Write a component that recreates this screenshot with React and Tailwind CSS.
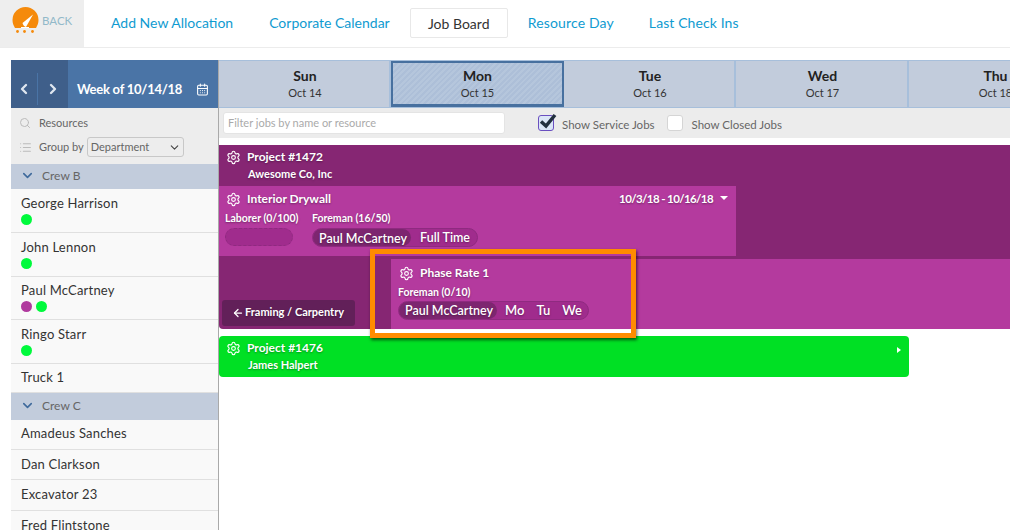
import React from "react";
import { Settings, ChevronLeft, ChevronRight, ChevronDown, CalendarDays, Search, List, ArrowLeft } from "lucide-react";

const ts = "[text-shadow:0_1px_2px_rgba(0,0,0,0.35)]";

function Gear() {
  return <Settings size={15} strokeWidth={1.8} className="text-white shrink-0" />;
}

function Logo() {
  return (
    <svg width="27" height="27" viewBox="0 0 27 27" className="shrink-0">
      <path d="M0.500 13a13 13 0 0 1 26 0c0 3-1 5.500-2.500 8H3c-1.500-2.500-2.500-5-2.500-8z" fill="#f58a0b" />
      <path d="M10.500 16 L21 7.500 L14 20 Q11.500 19.500 10.500 16z" fill="#fff" />
      <path d="M9 21h8v-1H9z" fill="#fff" />
      <circle cx="5.500" cy="24.500" r="1.400" fill="#f58a0b" />
      <circle cx="12.500" cy="24.500" r="1.400" fill="#f58a0b" />
      <circle cx="20.500" cy="24.500" r="1.400" fill="#f58a0b" />
    </svg>
  );
}

function Row({ name, dots = [], h, pt = "pt-[5px]" }) {
  return (
    <div className={`${h} ${pt} border-b border-[#e0e0e0] bg-[#f9f9f9] pl-[10px] box-border`}>
      <div className="text-[13px] leading-[18px] tracking-[0.2px] text-[#333]">{name}</div>
      {dots.length > 0 && (
        <div className="flex gap-[4px] mt-[2px]">
          {dots.map((c, i) => (
            <span key={i} className={`w-[11px] h-[11px] rounded-full ${c}`} />
          ))}
        </div>
      )}
    </div>
  );
}

function Crew({ name, h }) {
  return (
    <div className={`${h} bg-[#c2ccdc] flex items-center pl-[9px] pb-[2px] text-[12px] text-[#666]`}>
      <ChevronDown size={15} strokeWidth={2.5} className="text-[#3f6a9c] mr-[7px]" />
      {name}
    </div>
  );
}

function Day({ d, s, active, w }) {
  return (
    <div
      className={`${w} shrink-0 h-full box-border flex flex-col items-center ${
        active
          ? "pt-[4px] border-2 border-b-[3px] border-[#47709f] bg-[repeating-linear-gradient(135deg,#b5c6dc_0,#b5c6dc_2px,#adbfd8_2px,#adbfd8_4px)]"
          : "pt-[6px] pl-[2px] border-r-2 border-[#a7bfdb] bg-[#c2ccdc]"
      }`}
    >
      <div className="text-[14px] leading-[18px] font-bold text-[#222]">{d}</div>
      <div className="text-[11px] leading-[16px] text-[#333] whitespace-nowrap">{s}</div>
    </div>
  );
}

function Pill({ name, children, w }) {
  return (
    <div className={`flex items-center h-[19px] rounded-full bg-[#a02c8d] border border-[#8f2a80] ${w} text-white font-semibold ${ts}`}>
      <span className="h-full flex items-center rounded-full bg-[#7d2670] pl-[6px] pr-[4px] pt-[2px] text-[12.500px] font-semibold whitespace-nowrap">{name}</span>
      {children}
    </div>
  );
}

function Check({ on }) {
  return (
    <span className={`relative w-[16px] h-[16px] rounded-[3px] border shrink-0 ${on ? "border-[#6a4fc0] bg-[#dbe6f7]" : "border-[#d5d5d5] bg-white"}`}>
      {on && (
        <svg width="20" height="20" viewBox="0 0 20 20" className="absolute -top-[5px] -left-[1px]">
          <path d="M3 10.500 L8 15 L17 4" fill="none" stroke="#22303f" strokeWidth="3.500" />
        </svg>
      )}
    </span>
  );
}

export default function App() {
  return (
    <div className="relative w-[1010px] h-[530px] overflow-hidden bg-white font-['Lato','Liberation_Sans',sans-serif]">
      {/* Top navigation */}
      <div className="h-[48px] flex border-b border-[#ececec] box-border">
        <div className="w-[84px] h-full bg-[#eeeeee] flex items-start pl-[12px] pt-[7px] gap-[3px]">
          <Logo />
          <span className="text-[11.500px] leading-[27px] text-[#92b9c9]">BACK</span>
        </div>
        <div className="flex items-start text-[14px] text-[#0f9bd1] pt-[8px] pl-[27px]">
          <span className="leading-[30px]">Add New Allocation</span>
          <span className="leading-[30px] ml-[36px]">Corporate Calendar</span>
          <span className="ml-[20px] h-[30px] w-[98px] box-border border border-[#e8e8e8] rounded-[2px] flex items-center justify-center text-[#333]">Job Board</span>
          <span className="leading-[30px] ml-[20px] tracking-[0.15px]">Resource Day</span>
          <span className="leading-[30px] ml-[35px] tracking-[0.1px]">Last Check Ins</span>
        </div>
      </div>

      <div className="flex mt-[12px] pl-[11px]">
        {/* Sidebar */}
        <div className="w-[208px] shrink-0 border-r border-[#a9a9a9] box-border h-[470px]">
          <div className="h-[48px] flex bg-[#4a74a6] text-white">
            <div className="w-[57px] h-full bg-[#3f5f8a] flex items-center pt-[10px]">
              <div className="w-[27px] flex justify-center border-r border-[#4a74a6] h-[32px] items-center">
                <ChevronLeft size={16} strokeWidth={3.5} className="text-[#dfe6ef]" />
              </div>
              <div className="flex-1 flex justify-center">
                <ChevronRight size={16} strokeWidth={3.5} className="text-[#dfe6ef]" />
              </div>
            </div>
            <div className="flex-1 flex items-center pl-[9px] pr-[9px] pt-[11px] justify-between">
              <span className="text-[13px] font-bold tracking-[-0.25px]">Week of 10/14/18</span>
              <CalendarDays size={13} strokeWidth={2} />
            </div>
          </div>
          <div className="h-[56px] bg-[#ededed] pl-[8px] pt-[7px] text-[11px] text-[#666] box-border">
            <div className="flex items-center h-[16px]">
              <Search size={12} className="text-[#bbb] mr-[8px]" />
              Resources
            </div>
            <div className="flex items-center mt-[6px]">
              <List size={13} className="text-[#bbb] mr-[7px]" />
              <span>Group by</span>
              <span className="ml-[3px] w-[97px] h-[20px] box-border border border-[#c8c8c8] rounded-[3px] flex items-center justify-between pl-[3px] pr-[2px] text-[11px]">
                Department
                <ChevronDown size={13} strokeWidth={2} className="text-[#444]" />
              </span>
            </div>
          </div>
          <Crew name="Crew B" h="h-[25px]" />
          <Row name="George Harrison" dots={["bg-[#00fa3c]"]} h="h-[44px]" />
          <Row name="John Lennon" dots={["bg-[#00fa3c]"]} h="h-[44px]" />
          <Row name="Paul McCartney" dots={["bg-[#b03a9e]", "bg-[#00fa3c]"]} h="h-[43px]" pt="pt-[4px]" />
          <Row name="Ringo Starr" dots={["bg-[#00fa3c]"]} h="h-[44px]" />
          <Row name="Truck 1" h="h-[29px]" pt="pt-[4px]" />
          <Crew name="Crew C" h="h-[27px]" />
          <Row name="Amadeus Sanches" h="h-[30px]" pt="pt-[4px]" />
          <Row name="Dan Clarkson" h="h-[30px]" />
          <Row name="Excavator 23" h="h-[31px]" />
          <Row name="Fred Flintstone" h="h-[30px]" pt="pt-[5px]" />
        </div>

        {/* Main */}
        <div className="flex-1 min-w-0 overflow-hidden">
          <div className="h-[48px] flex w-[900px] border-t border-[#a7bfdb] border-b border-b-[#a7bfdb] box-border">
            <Day d="Sun" s="Oct 14" w="w-[172px]" />
            <Day d="Mon" s="Oct 15" active w="w-[173px]" />
            <Day d="Tue" s="Oct 16" w="w-[172px]" />
            <Day d="Wed" s="Oct 17" w="w-[173px]" />
            <Day d="Thu" s="Oct 18" w="w-[173px]" />
          </div>
          <div className="h-[30px] bg-[#ececec] flex items-center pl-[4px] text-[11.500px] text-[#666]">
            <div className="w-[282px] h-[22px] bg-white border border-[#e4e4e4] rounded-[3px] box-border flex items-center pl-[4px] text-[11px] text-[#aaa]">Filter jobs by name or resource</div>
            <div className="ml-[33px] flex items-center">
              <Check on />
              <span className="ml-[8px] pt-[4px]">Show Service Jobs</span>
            </div>
            <div className="ml-[12px] flex items-center">
              <Check />
              <span className="ml-[9px] pt-[4px]">Show Closed Jobs</span>
            </div>
          </div>

          <div className="mt-[7px] text-white">
            {/* Project 1472 */}
            <div className={`bg-[#862673] rounded-b-[4px] font-bold ${ts}`}>
              <div className="h-[41px] pl-[7px] pt-[4px] box-border">
                <div className="flex items-center gap-[6px] text-[12px] leading-[16px]">
                  <Gear />
                  Project #1472
                </div>
                <div className="text-[11px] leading-[14px] pl-[22px] mt-[2px]">Awesome Co, Inc</div>
              </div>
              <div className="w-[517px] h-[70px] bg-[#b43a9e] pl-[6px] pr-[8px] pt-[5px] box-border">
                <div className="flex items-center justify-between pl-[1px]">
                  <div className="flex items-center gap-[6px] text-[12px] leading-[16px]">
                    <Gear />
                    Interior Drywall
                  </div>
                  <div className="flex items-center gap-[7px] text-[11.500px] tracking-[-0.6px] leading-[16px]">
                    10/3/18 - 10/16/18
                    <span className="w-0 h-0 border-x-[4px] border-x-transparent border-t-[4px] border-t-white mb-[3px]" />
                  </div>
                </div>
                <div className="flex mt-[4px] text-[10.500px] leading-[14px]">
                  <div className="w-[87px]">
                    Laborer (0/100)
                    <div className="w-[68px] h-[18px] mt-[3px] rounded-full border border-dashed border-[#8f2a80] bg-[#a02c8d]" />
                  </div>
                  <div>
                    Foreman (16/50)
                    <div className="mt-[3px]">
                      <Pill name="Paul McCartney" w="w-[166px]">
                        <span className="pl-[9px] text-[12.500px]">Full Time</span>
                      </Pill>
                    </div>
                  </div>
                </div>
              </div>
              <div className="h-[3px]" />
              <div className="flex h-[70px]">
                <div className="w-[172px] shrink-0 flex items-end pl-[3px] pb-[3px]">
                  <div className="w-[133px] h-[26px] rounded-[3px] bg-[#622059] flex items-center pl-[10px] pb-[1px] gap-[1px] text-[11px]">
                    <ArrowLeft size={12} strokeWidth={2.5} />
                    Framing / Carpentry
                  </div>
                </div>
                <div className="flex-1 bg-[#b43a9e] pl-[7px] pt-[6px]">
                  <div className="flex items-center gap-[6px] text-[12px] leading-[16px] pl-[1px]">
                    <Gear />
                    Phase Rate 1
                  </div>
                  <div className="text-[10.500px] leading-[14px] mt-[4px]">Foreman (0/10)</div>
                  <div className="mt-[2px]">
                    <Pill name="Paul McCartney" w="w-[191px]">
                      <span className="pl-[8px] text-[13px]">Mo</span>
                      <span className="pl-[12px] text-[13px]">Tu</span>
                      <span className="pl-[12px] text-[13px]">We</span>
                    </Pill>
                  </div>
                </div>
              </div>
            </div>

            {/* Project 1476 */}
            <div className={`mt-[7px] w-[690px] h-[41px] rounded-[4px] bg-[#00e024] pl-[7px] pr-[8px] pt-[4px] box-border font-bold relative ${ts}`}>
              <div className="flex items-center gap-[6px] text-[12px] leading-[16px]">
                <Gear />
                Project #1476
              </div>
              <div className="text-[11px] leading-[14px] pl-[22px] mt-[2px]">James Halpert</div>
              <span className="absolute right-[8px] top-[11px] w-0 h-0 border-y-[3px] border-y-transparent border-l-[4px] border-l-white" />
            </div>
          </div>
        </div>
      </div>

      {/* Orange callout */}
      <div className="absolute left-[370px] top-[249px] w-[266px] h-[89px] box-border border-[5px] border-[#ff8c00] shadow-[1px_2px_3px_rgba(0,0,0,0.6)] pointer-events-none" />
      <div className="absolute left-[375px] top-[329px] w-[256px] h-[4px] bg-white pointer-events-none" />
    </div>
  );
}
